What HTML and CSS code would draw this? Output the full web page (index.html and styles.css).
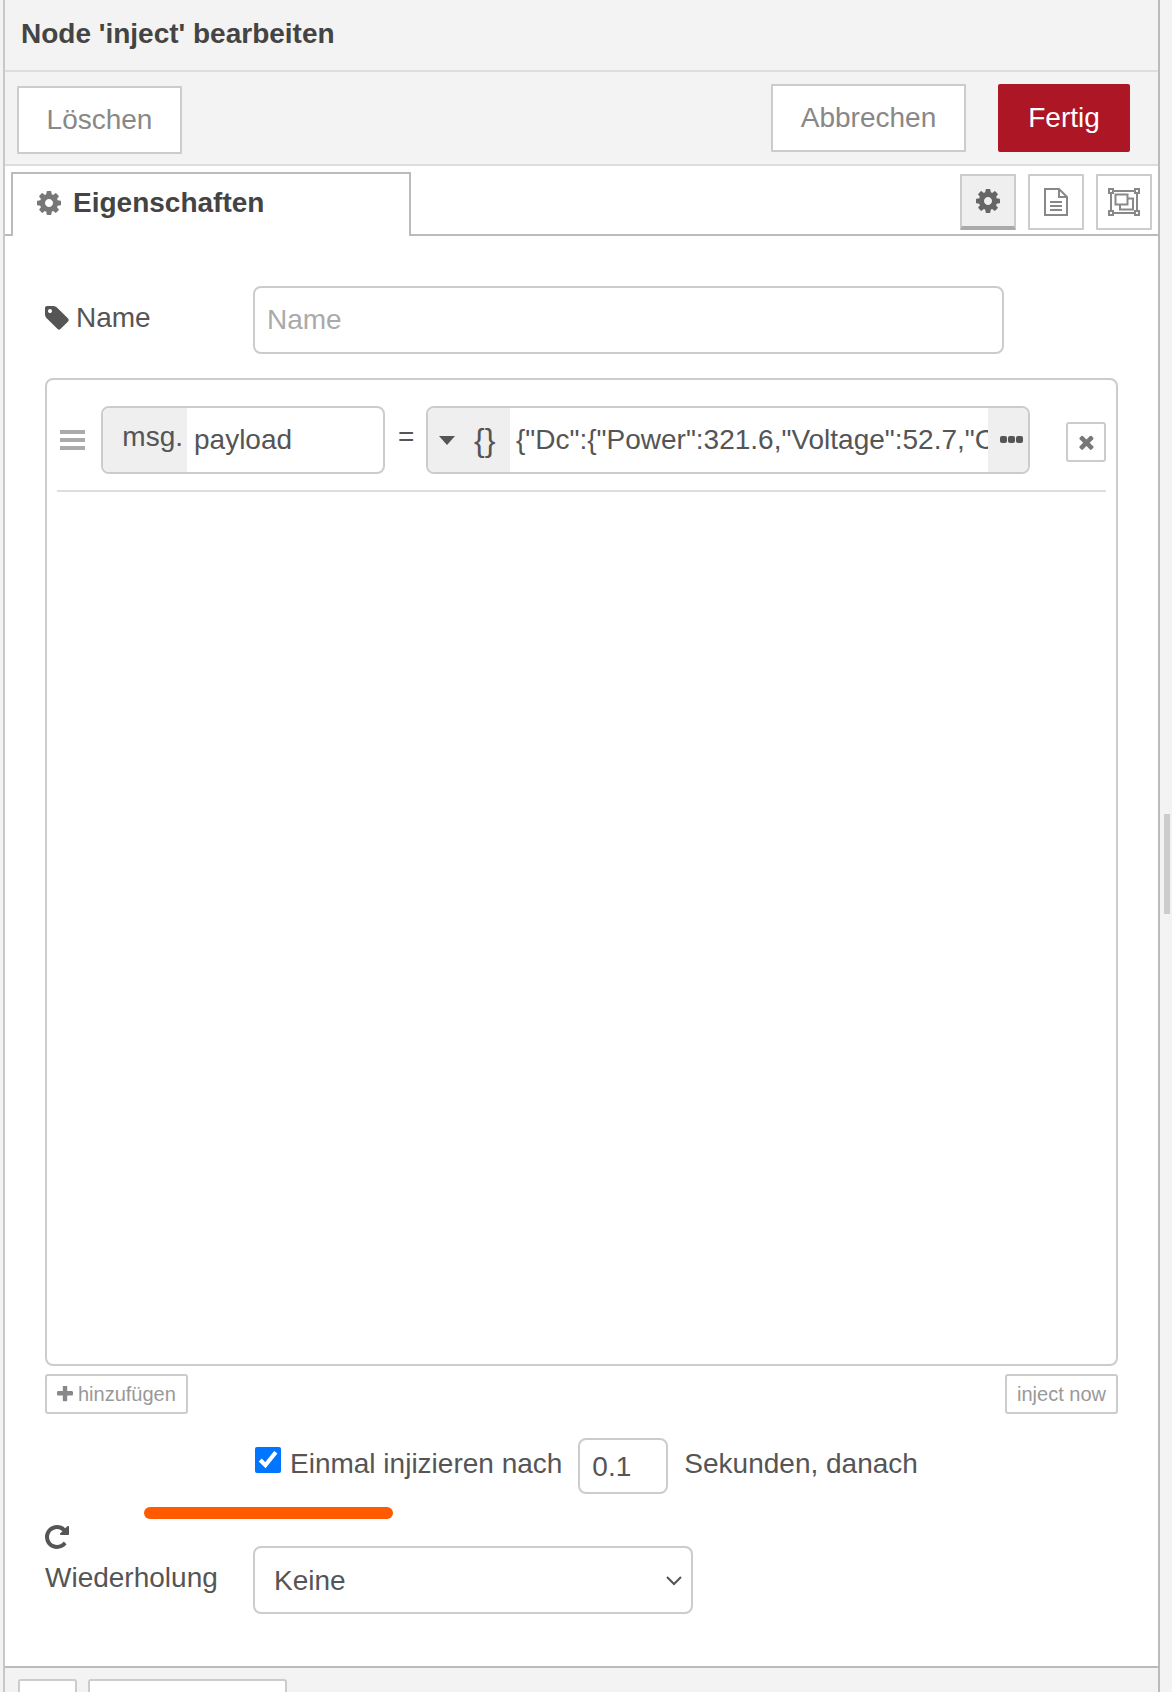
FILE: index.html
```html
<!DOCTYPE html>
<html lang="de">
<head>
<meta charset="utf-8">
<title>Node 'inject' bearbeiten</title>
<link rel="stylesheet" href="styles.css">
</head>
<body>
<div class="page">
  <main class="tray">
    <header class="tray-title">Node 'inject' bearbeiten</header>
    <div class="actions">
      <button class="btn btn-delete">Löschen</button>
      <div class="actions-right">
        <button class="btn btn-cancel">Abbrechen</button>
        <button class="btn btn-done">Fertig</button>
      </div>
    </div>
    <div class="tabs">
      <div class="tab">
        <svg class="icon tab-gear" viewBox="128 128 1536 1536"><path d="M1152 896q0-106-75-181t-181-75-181 75-75 181 75 181 181 75 181-75 75-181zm512-109v222q0 12-8 23t-20 13l-185 28q-19 54-39 91 35 50 107 138 10 12 10 25t-9 23q-27 37-99 108t-94 71q-12 0-26-9l-138-108q-44 23-91 38-16 136-29 186-7 28-36 28h-222q-14 0-24.5-8.5t-11.5-21.5l-28-184q-49-16-90-37l-141 107q-10 9-25 9-14 0-25-11-126-114-165-168-7-10-7-23 0-12 8-23 15-21 51-66.5t54-70.5q-27-50-41-99l-183-27q-13-2-21-12.5t-8-23.5v-222q0-12 8-23t19-13l186-28q14-46 39-92-40-57-107-138-10-12-10-24 0-10 9-23 26-36 98.5-107.5t94.5-71.5q13 0 26 10l138 107q44-23 91-38 16-136 29-186 7-28 36-28h222q14 0 24.5 8.5t11.5 21.5l28 184q49 16 90 37l142-107q9-9 24-9 13 0 25 10 129 119 165 170 7 8 7 22 0 12-8 23-15 21-51 66.5t-54 70.5q26 50 41 98l183 28q13 2 21 12.5t8 23.5z"/></svg>
        <span>Eigenschaften</span>
      </div>
      <div class="tab-tools">
        <button class="tool tool-active">
          <svg class="icon tool-gear" viewBox="128 128 1536 1536"><path d="M1152 896q0-106-75-181t-181-75-181 75-75 181 75 181 181 75 181-75 75-181zm512-109v222q0 12-8 23t-20 13l-185 28q-19 54-39 91 35 50 107 138 10 12 10 25t-9 23q-27 37-99 108t-94 71q-12 0-26-9l-138-108q-44 23-91 38-16 136-29 186-7 28-36 28h-222q-14 0-24.5-8.5t-11.5-21.5l-28-184q-49-16-90-37l-141 107q-10 9-25 9-14 0-25-11-126-114-165-168-7-10-7-23 0-12 8-23 15-21 51-66.5t54-70.5q-27-50-41-99l-183-27q-13-2-21-12.5t-8-23.5v-222q0-12 8-23t19-13l186-28q14-46 39-92-40-57-107-138-10-12-10-24 0-10 9-23 26-36 98.5-107.5t94.5-71.5q13 0 26 10l138 107q44-23 91-38 16-136 29-186 7-28 36-28h222q14 0 24.5 8.5t11.5 21.5l28 184q49 16 90 37l142-107q9-9 24-9 13 0 25 10 129 119 165 170 7 8 7 22 0 12-8 23-15 21-51 66.5t-54 70.5q26 50 41 98l183 28q13 2 21 12.5t8 23.5z"/></svg>
        </button>
        <button class="tool">
          <svg class="line-icon doc-icon" viewBox="0 0 24 28"><path d="M1 1h14l8 8v18H1z"/><path d="M15 1v8h8"/><path d="M6 14h12M6 18h12M6 22h12"/></svg>
        </button>
        <button class="tool">
          <svg class="line-icon frame-icon" viewBox="0 0 32 28"><rect x="1" y="1" width="4" height="4"/><rect x="27" y="1" width="4" height="4"/><rect x="1" y="23" width="4" height="4"/><rect x="27" y="23" width="4" height="4"/><path d="M5 3h22M5 25h22M3 5v18M29 5v18"/><path d="M7.500 6.500h12v10h-12z"/><path d="M19.500 10.500h5.500v11h-13v-5"/></svg>
        </button>
      </div>
    </div>
    <section class="form">
      <div class="form-row name-row">
        <label class="form-label">
          <svg class="icon tag-icon" viewBox="128 128 1536 1536"><path d="M576 448q0-53-37.500-90.500t-90.500-37.500-90.500 37.500-37.500 90.500 37.500 90.500 90.500 37.500 90.500-37.500 37.500-90.500zm1067 576q0 53-37 90l-491 492q-39 37-91 37-53 0-90-37l-715-716q-38-37-64.500-101t-26.500-117v-416q0-52 38-90t90-38h416q53 0 117 26.500t102 64.500l715 714q37 39 37 91z"/></svg>
          <span>Name</span>
        </label>
        <input class="text-input name-input" type="text" placeholder="Name">
      </div>

      <div class="list">
        <div class="list-row">
          <div class="handle"><i></i><i></i><i></i></div>
          <div class="typed typed-msg">
            <span class="typed-prefix">msg.</span>
            <input class="typed-field" type="text" value="payload">
          </div>
          <span class="equals">=</span>
          <div class="typed typed-value">
            <span class="type-select">
              <svg class="caret" viewBox="0 0 16 9"><path d="M0 0h16L8 9z"/></svg>
              <span class="braces">{}</span>
            </span>
            <input class="typed-field value-field" type="text" value='{"Dc":{"Power":321.6,"Voltage":52.7,"Current":6.1}}'>
            <span class="expand"><i></i><i></i><i></i></span>
          </div>
          <button class="remove">
            <svg class="icon x-icon" viewBox="300 300 1200 1260"><path d="M1490 1322q0 40-28 68l-136 136q-28 28-68 28t-68-28l-294-294-294 294q-28 28-68 28t-68-28l-136-136q-28-28-28-68t28-68l294-294-294-294q-28-28-28-68t28-68l136-136q28-28 68-28t68 28l294 294 294-294q28-28 68-28t68 28l136 136q28 28 28 68t-28 68l-294 294 294 294q28 28 28 68z"/></svg>
          </button>
        </div>
      </div>

      <div class="list-buttons">
        <button class="small-btn add-btn">
          <svg class="icon plus-icon" viewBox="192 192 1408 1408"><path d="M1600 736v192q0 40-28 68t-68 28h-416v416q0 40-28 68t-68 28h-192q-40 0-68-28t-28-68v-416h-416q-40 0-68-28t-28-68v-192q0-40 28-68t68-28h416v-416q0-40 28-68t68-28h192q40 0 68 28t28 68v416h416q40 0 68 28t28 68z"/></svg>
          <span>hinzufügen</span>
        </button>
        <button class="small-btn inject-btn">inject now</button>
      </div>

      <div class="once-row">
        <input class="once-check" type="checkbox" checked>
        <span class="once-text">Einmal injizieren nach</span>
        <input class="text-input once-input" type="text" value="0.1">
        <span class="once-text">Sekunden, danach</span>
      </div>

      <div class="marker"></div>

      <div class="repeat-row">
        <label class="repeat-label">
          <svg class="icon repeat-icon" viewBox="128 128 1536 1536"><path d="M1664 256v448q0 26-19 45t-45 19h-448q-42 0-59-40-17-39 14-69l138-138q-148-137-349-137-104 0-198.500 40.500t-163.500 109.500-109.500 163.500-40.500 198.500 40.500 198.500 109.500 163.500 163.500 109.500 198.500 40.500q119 0 225-52t179-147q7-10 23-12 15 0 25 9l137 138q9 8 9.500 20.500t-7.500 22.500q-109 132-264 204.500t-327 72.500q-156 0-298-61t-245-164-164-245-61-298 61-298 164-245 245-164 298-61q147 0 284.500 55.500t244.500 156.500l130-129q29-31 70-14 39 17 39 59z"/></svg>
          <span>Wiederholung</span>
        </label>
        <div class="select-wrap">
          <select class="repeat-select"><option>Keine</option></select>
          <svg class="chevron" viewBox="0 0 16 10"><path d="M1 1l7 7 7-7"/></svg>
        </div>
      </div>
    </section>
    <footer class="tray-footer">
      <button class="foot-btn foot-a"></button>
      <button class="foot-btn foot-b"></button>
    </footer>
  </main>
  <aside class="scrollbar"><div class="thumb"></div></aside>
</div>
</body>
</html>
```
FILE: styles.css
```css
* { box-sizing: border-box; }
html, body { margin: 0; padding: 0; }
body {
  width: 1172px;
  height: 1692px;
  overflow: hidden;
  background: #f3f3f3;
  font-family: "Liberation Sans", Arial, sans-serif;
  font-size: 28px;
  color: #555;
}
button, input, select { font-family: inherit; margin: 0; }
.page { display: flex; height: 1692px; padding-left: 3px; }
.tray {
  width: 1157px;
  height: 1692px;
  display: flex;
  flex-direction: column;
  border-left: 2px solid #c8c8c8;
  border-right: 2px solid #bbb;
  background: #fff;
  overflow: hidden;
}
.scrollbar { flex: 1; padding: 814px 2px 0 4px; }
.thumb { width: 6px; height: 100px; background: #ccc; }
.icon { display: block; fill: currentColor; flex: none; }

.tray-title {
  height: 72px;
  padding: 0 16px;
  line-height: 68px;
  font-size: 28px;
  font-weight: 700;
  color: #444;
  background: #f3f3f3;
  border-bottom: 2px solid #ddd;
}
.actions {
  height: 94px;
  display: flex;
  justify-content: space-between;
  align-items: flex-start;
  padding: 0 28px 0 12px;
  background: #f3f3f3;
  border-bottom: 2px solid #ddd;
}
.actions-right { display: flex; gap: 32px; padding-top: 12px; }
.btn {
  font-size: 28px;
  background: #fff;
  color: #888;
  border: 2px solid #ccc;
  border-radius: 1px;
  padding: 0;
}
.btn-delete { width: 165px; height: 68px; margin-top: 14px; }
.btn-cancel { width: 195px; height: 68px; }
.btn-done { width: 132px; height: 68px; background: #ad1625; border-color: #ad1625; color: #fff; border-radius: 2px; }

.tabs {
  height: 70px;
  display: flex;
  justify-content: space-between;
  padding: 6px 6px 0 6px;
  background: #fff;
  border-bottom: 2px solid #bbb;
}
.tab {
  width: 400px;
  height: 64px;
  display: flex;
  align-items: flex-start;
  gap: 12px;
  padding: 13px 0 0 24px;
  border: 2px solid #bbb;
  border-bottom: 0;
  background: #fff;
  font-weight: 700;
  color: #444;
  line-height: 32px;
}
.tab-gear { width: 24px; height: 24px; margin-top: 4px; color: #777; }
.tab-tools { display: flex; gap: 12px; padding-top: 2px; }
.tool {
  width: 56px;
  height: 56px;
  padding: 0;
  display: flex;
  align-items: center;
  justify-content: center;
  background: #fff;
  border: 2px solid #ccc;
  border-radius: 1px;
}
.tool-active { background: #efefef; border-bottom: 4px solid #aaa; }
.tool-gear { width: 24px; height: 24px; color: #666; }
.line-icon { display: block; fill: none; stroke: #888; stroke-width: 2; }
.doc-icon { width: 24px; height: 28px; }
.frame-icon { width: 32px; height: 28px; }

.form { flex: 1; position: relative; padding: 50px 0 0 40px; background: #fff; }
.form-row { display: flex; align-items: flex-start; }
.form-label { width: 208px; display: flex; align-items: center; gap: 7px; padding-top: 17px; line-height: 30px; }
.tag-icon { width: 24px; height: 24px; color: #555; }
.text-input {
  font-size: 28px;
  color: #555;
  background: #fff;
  border: 2px solid #ccc;
  border-radius: 8px;
  outline: none;
}
.text-input::placeholder { color: #aaa; }
.name-input { width: 751px; height: 68px; padding: 0 12px; }

.list {
  width: 1073px;
  height: 988px;
  margin-top: 24px;
  border: 2px solid #ccc;
  border-radius: 8px;
  padding: 0 10px;
}
.list-row {
  height: 112px;
  display: flex;
  align-items: flex-start;
  padding-top: 26px;
  border-bottom: 2px solid #ddd;
}
.handle { width: 25px; margin: 24px 0 0 3px; display: flex; flex-direction: column; gap: 4px; }
.handle i { display: block; height: 4px; background: #aaa; }
.typed {
  height: 68px;
  display: flex;
  align-items: stretch;
  background: #fff;
  border: 2px solid #ccc;
  border-radius: 8px;
  overflow: hidden;
}
.typed-msg { width: 284px; margin-left: 16px; }
.typed-prefix {
  width: 84px;
  flex: none;
  background: #efefef;
  text-align: right;
  padding-right: 4px;
  line-height: 58px;
}
.typed-field {
  flex: 1;
  min-width: 0;
  border: 0;
  outline: none;
  background: transparent;
  font-size: 28px;
  color: #555;
  padding: 0 0 0 7px;
}
.equals { width: 14px; margin: 0 0 0 13px; line-height: 62px; text-align: center; }
.typed-value { width: 604px; margin-left: 14px; }
.type-select {
  width: 82px;
  flex: none;
  display: flex;
  align-items: center;
  background: #efefef;
  padding-left: 11px;
  gap: 19px;
}
.caret { width: 16px; height: 9px; fill: #555; flex: none; }
.braces { font-size: 32px; line-height: 60px; }
.value-field { padding-left: 6px; }
.expand {
  width: 40px;
  flex: none;
  display: flex;
  align-items: center;
  gap: 1px;
  background: #efefef;
  padding: 0 0 2px 12px;
}
.expand i { display: block; width: 7px; height: 7px; border-radius: 2px; background: #555; }
.remove {
  width: 40px;
  height: 40px;
  margin: 16px 0 0 36px;
  padding: 0;
  display: flex;
  align-items: center;
  justify-content: center;
  background: #fff;
  border: 2px solid #ccc;
  border-radius: 3px;
}
.x-icon { width: 15px; height: 15px; color: #777; }

.list-buttons { width: 1073px; margin-top: 8px; display: flex; justify-content: space-between; }
.small-btn {
  height: 40px;
  display: flex;
  align-items: center;
  padding: 0;
  font-size: 20px;
  color: #999;
  background: #fff;
  border: 2px solid #ccc;
  border-radius: 3px;
}
.add-btn { width: 143px; padding-left: 10px; gap: 5px; }
.plus-icon { width: 16px; height: 16px; color: #888; }
.inject-btn { width: 113px; justify-content: center; }

.once-row { display: flex; align-items: flex-start; margin-top: 24px; padding-left: 210px; }
.once-check { width: 26px; height: 26px; margin: 9px 9px 0 0; accent-color: #0075ff; }
.once-text { line-height: 52px; }
.once-input { width: 90px; height: 56px; margin: 0 16px 0 16px; padding: 2px 0 0 12px; }

.marker {
  position: absolute;
  left: 139px;
  top: 1271px;
  width: 249px;
  height: 12px;
  border-radius: 6px;
  background: #ff5a00;
}

.repeat-row { display: flex; align-items: flex-start; margin-top: 31px; }
.repeat-label { width: 208px; display: flex; flex-direction: column; align-items: flex-start; gap: 13px; line-height: 32px; }
.repeat-icon { width: 24px; height: 24px; color: #555; }
.select-wrap { position: relative; width: 440px; margin-top: 21px; }
.repeat-select {
  display: block;
  width: 440px;
  height: 68px;
  appearance: none;
  font-size: 28px;
  color: #555;
  background: #fff;
  border: 2px solid #ccc;
  border-radius: 8px;
  padding: 0 19px;
  outline: none;
}
.chevron {
  position: absolute;
  right: 11px;
  top: 30px;
  width: 16px;
  height: 10px;
  fill: none;
  stroke: #555;
  stroke-width: 2;
}

.tray-footer {
  height: 26px;
  display: flex;
  gap: 11px;
  padding: 11px 0 0 13px;
  background: #f3f3f3;
  border-top: 2px solid #bbb;
  overflow: hidden;
}
.foot-btn { height: 60px; flex: none; background: #fff; border: 2px solid #ccc; border-radius: 3px; padding: 0; }
.foot-a { width: 59px; }
.foot-b { width: 199px; }
```
